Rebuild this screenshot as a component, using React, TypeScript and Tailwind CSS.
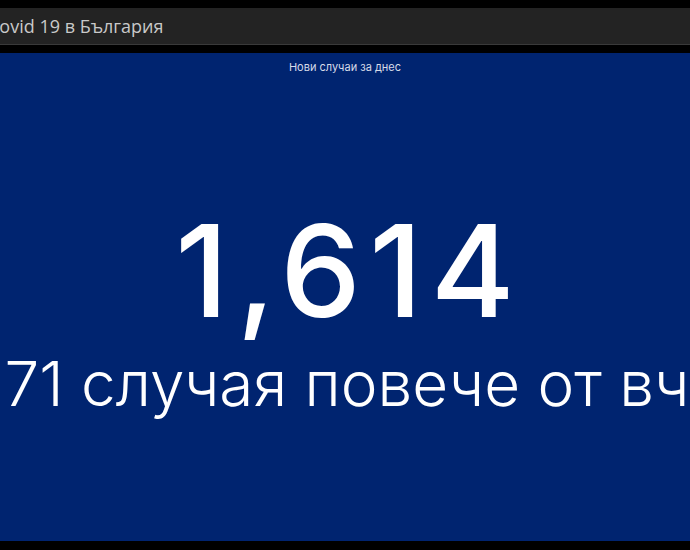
import React from 'react';

export default function App() {
  return (
    <div className="w-[690px] h-[550px] bg-black overflow-hidden flex flex-col">
      {/* Title bar */}
      <div className="mt-[8px] h-[37px] bg-[#232323] border-b border-[#3a3a3a] flex items-center overflow-hidden">
        <span className="-ml-[12px] whitespace-nowrap text-[18px] text-[#c9c9c9] font-['Open_Sans',sans-serif]">
          Covid 19 в България
        </span>
      </div>

      {/* Indicator panel */}
      <div className="mt-[8px] h-[488px] bg-[#002470] flex flex-col items-center overflow-hidden font-['Inter',sans-serif] text-white">
        <div className="mt-[7px] text-[11px] leading-[14px] text-[#d6dbe8]">Нови случаи за днес</div>
        <div className="mt-[133px] pl-[0.065em] text-[128px] leading-[128px] font-medium tracking-[0.065em]">1,614</div>
        <div className="mt-[14px] pl-[112px] text-[62px] leading-[70px] font-light whitespace-nowrap">
          71 случая повече от вчера
        </div>
      </div>
    </div>
  );
}
